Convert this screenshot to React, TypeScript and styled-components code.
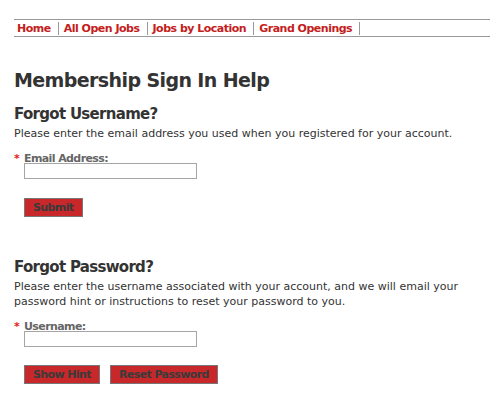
import styled, { createGlobalStyle } from 'styled-components'

const GlobalStyle = createGlobalStyle`
  html, body {
    margin: 0;
    padding: 0;
    background: #fff;
  }
  body {
    font-family: Verdana, "DejaVu Sans", sans-serif;
    color: #333;
  }
`

const Page = styled.div`
  padding: 19px 0 0 14px;
  width: 476px;
`

const Nav = styled.ul`
  display: flex;
  align-items: center;
  list-style: none;
  margin: 0;
  padding: 0 0 0 3px;
  height: 16px;
  border-top: 1px solid #999;
  border-bottom: 1px solid #999;
`

const NavItem = styled.li`
  padding-right: 7px;
  margin-right: 5px;
  border-right: 1px solid #999;
  height: 13px;
  display: flex;
  align-items: center;
`

const NavLink = styled.a`
  color: #c4201c;
  font-size: 11px;
  font-weight: bold;
  letter-spacing: -0.5px;
  text-decoration: none;
`

const Title = styled.h1`
  font-size: 19px;
  font-weight: bold;
  letter-spacing: -0.6px;
  margin: 31px 0 0;
  line-height: 24px;
`

const SectionTitle = styled.h2<{ $top: number }>`
  font-size: 15px;
  font-weight: bold;
  letter-spacing: -0.7px;
  margin: ${({ $top }) => $top}px 0 0;
  line-height: 18px;
`

const Text = styled.p`
  font-size: 11px;
  line-height: 15px;
  margin: 3px 0 0;
`

const Field = styled.div`
  margin-top: 13px;
`

const Label = styled.label`
  display: flex;
  align-items: baseline;
  font-size: 11px;
  font-weight: bold;
  letter-spacing: -0.6px;
  color: #666;
  line-height: 9px;
`

const Star = styled.span`
  color: #e1211b;
  width: 10px;
`

const Input = styled.input`
  display: block;
  box-sizing: border-box;
  margin: 0 0 0 10px;
  width: 173px;
  height: 16px;
  border: 1px solid #a5a5a5;
  padding: 0 2px;
  font-size: 11px;
`

const Buttons = styled.div<{ $top: number }>`
  display: flex;
  gap: 10px;
  margin: ${({ $top }) => $top}px 0 0 10px;
`

const Button = styled.button`
  box-sizing: border-box;
  height: 19px;
  padding: 0 8px;
  background: #c8282a;
  border: 1px solid #777;
  color: #3a3a3a;
  font-family: Verdana, "DejaVu Sans", sans-serif;
  font-size: 11px;
  font-weight: bold;
  letter-spacing: -0.6px;
  line-height: 17px;
`

const navItems = ['Home', 'All Open Jobs', 'Jobs by Location', 'Grand Openings']

export default function App() {
  return (
    <Page>
      <GlobalStyle />
      <Nav>
        {navItems.map((item) => (
          <NavItem key={item}>
            <NavLink href="#">{item}</NavLink>
          </NavItem>
        ))}
      </Nav>

      <Title>Membership Sign In Help</Title>

      <SectionTitle $top={13}>Forgot Username?</SectionTitle>
      <Text>Please enter the email address you used when you registered for your account.</Text>
      <Field>
        <Label>
          <Star>*</Star>Email Address:
        </Label>
        <Input type="text" />
      </Field>
      <Buttons $top={19}>
        <Button>Submit</Button>
      </Buttons>

      <SectionTitle $top={41}>Forgot Password?</SectionTitle>
      <Text>
        Please enter the username associated with your account, and we will email your password hint or
        instructions to reset your password to you.
      </Text>
      <Field>
        <Label>
          <Star>*</Star>Username:
        </Label>
        <Input type="text" />
      </Field>
      <Buttons $top={18}>
        <Button>Show Hint</Button>
        <Button>Reset Password</Button>
      </Buttons>
    </Page>
  )
}
